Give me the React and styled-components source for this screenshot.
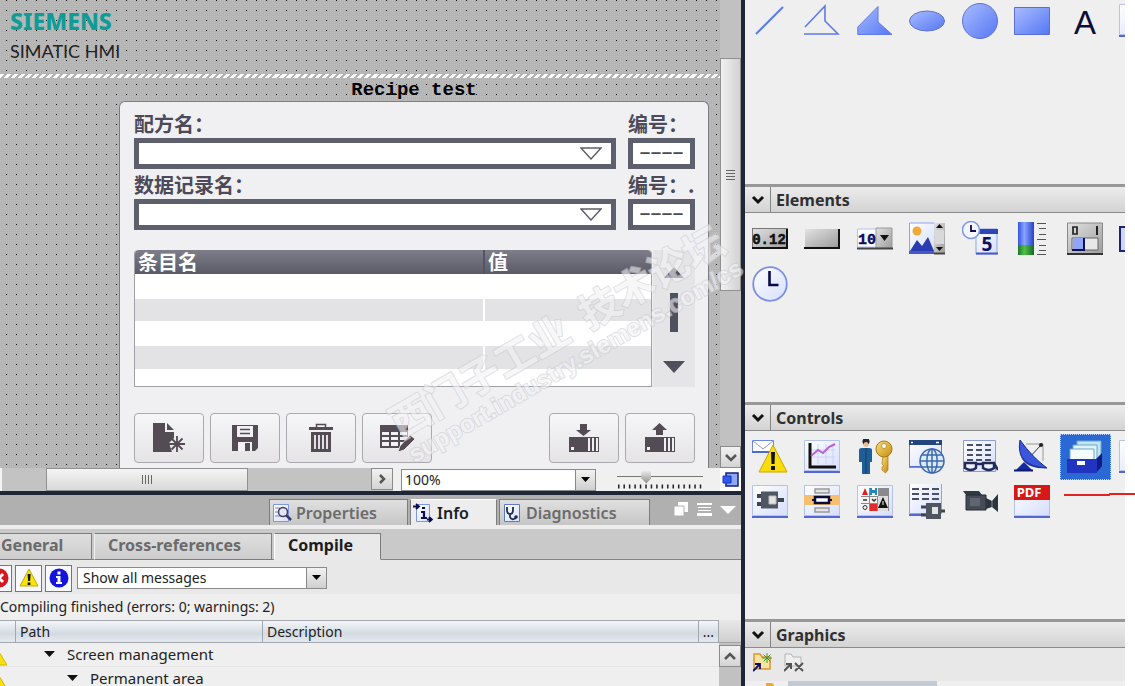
import React from "react";
import styled, { createGlobalStyle, css } from "styled-components";

const ui = `"Noto Sans", "Open Sans", "Liberation Sans", sans-serif`;
const cjk = `"Noto Sans CJK SC", "Noto Sans", sans-serif`;
const bevel = "linear-gradient(#f4f4f4, #d9d9d9)";

const Global = createGlobalStyle`
  * { box-sizing: border-box; }
  body { margin: 0; background: #fff; font-family: ${ui}; font-size: 14px; color: #222; }
  button, select, input { font: inherit; color: inherit; margin: 0; padding: 0; border-radius: 0; outline: none; }
  svg { display: block; }
`;

const Shell = styled.div`
  display: flex;
  height: 100vh;
  overflow: hidden;
  padding-right: 10px;
`;
const Workspace = styled.main`
  position: relative;
  flex: 1;
  min-width: 0;
  display: flex;
  flex-direction: column;
  border-right: 4px solid #1f2636;
`;

/* ---------- screen editor ---------- */
const Editor = styled.section`
  display: flex;
  flex: none;
`;
const dots = css`
  background-color: #b4b4b4;
  background-image: conic-gradient(at 1px 1px, transparent 75%, #161616 0),
    conic-gradient(at 1px 1px, transparent 75%, #bebebe 0);
  background-size: 10px 10px, 2px 2px;
`;
const Canvas = styled.div`
  flex: 1;
  min-width: 0;
`;
const Banner = styled.header`
  ${dots}
  background-position: 6px 0, 0 0;
  height: 74px;
  padding: 6px 10px;
`;
const Brand = styled.div`
  font-size: 23px;
  font-weight: 800;
  line-height: 30px;
  color: #0f9c96;
`;
const Product = styled.div`
  font-family: Lato, ${ui};
  font-size: 18px;
  line-height: 30px;
  color: #222;
`;
const Hatch = styled.div`
  height: 4px;
  background: repeating-linear-gradient(135deg, #fff 0 3px, #b4b4b4 3px 5px);
`;
const ScreenBody = styled.div`
  ${dots}
  background-position: 6px 6px, 0 0;
  padding: 0 11px 0 119px;
`;
const ScreenTitle = styled.h1`
  margin: 0;
  text-align: center;
  font: bold 19px/24px "Liberation Mono", monospace;
  height: 23px;
  color: #000;
`;
const Recipe = styled.div`
  background: #f0f0f3;
  border: 1px solid #7c7c82;
  border-bottom: 0;
  border-radius: 6px 6px 0 0;
  padding: 12px 13px 5px 14px;
  font-family: ${cjk};
`;
const FieldRow = styled.div`
  display: grid;
  grid-template-columns: 1fr 67px;
  column-gap: 12px;
  margin-bottom: 6px;
`;
const Field = styled.label`
  display: flex;
  flex-direction: column;
  gap: 4px;
  font-size: 20px;
  font-weight: 700;
  line-height: 20px;
  color: #4c4a58;
  white-space: nowrap;
`;
const arrowOutline = `url("data:image/svg+xml,%3Csvg xmlns='http://www.w3.org/2000/svg' width='22' height='13'%3E%3Cpath d='M1 1h20L11 12z' fill='white' stroke='%235c5d69' stroke-width='1.4'/%3E%3C/svg%3E")`;
const RecipeSelect = styled.select`
  appearance: none;
  height: 31px;
  border: 5px solid #5d5f6c;
  background: #fff ${arrowOutline} no-repeat right 9px center;
`;
const NumberBox = styled.input`
  width: 100%;
  height: 31px;
  padding-bottom: 8px;
  border: 5px solid #5d5f6c;
  background: #fff;
  text-align: center;
  font: 22px/20px "Noto Sans", sans-serif;
  color: #4c4a58;
`;
const ListArea = styled.div`
  display: grid;
  grid-template-columns: 1fr 43px;
  margin: 20px 0 26px;
`;
const EntryTable = styled.table`
  width: 100%;
  table-layout: fixed;
  border-collapse: separate;
  border-spacing: 0;
  background: #fff;
  border: 1px solid #a0a0a8;
  border-top: 0;
  border-radius: 4px 4px 0 0;
  th {
    height: 24px;
    padding: 0 3px;
    text-align: left;
    font-size: 20px;
    line-height: 24px;
    color: #fff;
    background: linear-gradient(#7e7e8a, #5b5b68);
  }
  th:first-child { border-radius: 4px 0 0 0; }
  th:last-child { border-radius: 0 4px 0 0; }
  th + th { border-left: 2px solid #555462; }
`;
const EntryRow = styled.tr`
  td {
    height: ${(p) => p.$h}px;
    padding: 0;
    background: ${(p) => (p.$alt ? "#e3e3e5" : "#fff")};
  }
  td + td { border-left: 2px solid #fff; }
`;
const ListScroll = styled.div`
  display: flex;
  flex-direction: column;
  align-items: center;
  margin-left: 1px;
  padding-top: 17px;
  background: #e5e5e8;
`;
const ListGrip = styled.div`
  width: 8px;
  height: 39px;
  margin: 14px 0 29px;
  background: #4f505e;
`;
const ButtonRow = styled.div`
  display: flex;
  gap: 6px;
`;
const Spacer = styled.div`
  flex: 1;
`;
const RecipeButton = styled.button`
  width: 70px;
  height: 50px;
  display: grid;
  place-items: center;
  background: linear-gradient(#f6f6f8, #e5e3e6);
  border: 1px solid #a9a9b0;
  border-radius: 4px;
`;

/* ---------- scroll bars ---------- */
const VScroll = styled.div`
  width: ${(p) => p.$w || 21}px;
  flex: none;
  display: flex;
  flex-direction: column;
  background: #c1c1c1;
  padding-top: ${(p) => p.$top}px;
`;
const Thumb = styled.div`
  display: grid;
  place-items: center;
  border: 1px solid #fff;
  outline: 1px solid #909090;
  outline-offset: -1px;
  background: ${(p) => (p.$h ? "linear-gradient(90deg, #f0f0f0, #d2d2d2)" : bevel)};
  ${(p) => (p.$h ? `height: ${p.$h}px;` : `width: ${p.$w}px; height: 100%;`)}
`;
const ScrollButton = styled.button`
  width: ${(p) => p.$w || 22}px;
  height: 22px;
  flex: none;
  display: grid;
  place-items: center;
  border: 1px solid #8b8b8b;
  background: linear-gradient(#f2f2f2, #d4d4d4);
`;
const StatusBar = styled.div`
  flex: none;
  display: flex;
  align-items: center;
  height: 23px;
  background: #f0f0f0;
`;
const HScroll = styled.div`
  flex: 1;
  height: 100%;
  display: flex;
  margin-right: 8px;
  background: #c3c3c3;
  border-left: 2px solid #f4f4f4;
  padding-left: 44px;
`;
const comboArrow = `url("data:image/svg+xml,%3Csvg xmlns='http://www.w3.org/2000/svg' width='20' height='20'%3E%3Cdefs%3E%3ClinearGradient id='g' x2='0' y2='1'%3E%3Cstop stop-color='%23f2f2f2'/%3E%3Cstop offset='1' stop-color='%23cfcfcf'/%3E%3C/linearGradient%3E%3C/defs%3E%3Cpath d='M0 0h20v20H0z' fill='url(%23g)'/%3E%3Cpath d='M.5 0v20' stroke='%23888'/%3E%3Cpath d='M6 7h9l-4.500 5z'/%3E%3C/svg%3E")`;
const Combo = styled.select`
  appearance: none;
  width: ${(p) => p.$w}px;
  height: 22px;
  padding: 0 24px 0 ${(p) => p.$pad}px;
  border: 1px solid #8a8a8a;
  background: #fff ${comboArrow} no-repeat right center;
  font-size: 14px;
  line-height: 20px;
`;
const ZoomBox = styled.div`
  width: 86px;
  margin: 0 17px 0 21px;
  display: flex;
  flex-direction: column;
`;
const ZoomRange = styled.input`
  appearance: none;
  width: 100%;
  height: 13px;
  background: linear-gradient(#777, #777) no-repeat 0 5px / 100% 1px;
  &::-webkit-slider-thumb {
    appearance: none;
    width: 10px;
    height: 13px;
    background: linear-gradient(#e8e8e8, #8c8c8c);
    clip-path: polygon(0 0, 100% 0, 100% 60%, 50% 100%, 0 60%);
  }
`;
const FitButton = styled.button`
  width: 21px;
  height: 23px;
  border: 0;
  background: #fff;
  display: grid;
  place-items: center;
`;

const Watermark = styled.div`
  position: absolute;
  z-index: 3;
  left: 382px;
  top: 407px;
  transform: rotate(-30deg);
  transform-origin: 0 0;
  white-space: pre;
  pointer-events: none;
  opacity: 0.6;
  font: bold 40px/40px "Noto Sans CJK SC", sans-serif;
  color: #f3f3f5;
  paint-order: stroke fill;
  -webkit-text-stroke: 2px #cbcbd0;
  small {
    display: block;
    font: bold 24px/34px "Liberation Sans", sans-serif;
  }
`;

/* ---------- inspector ---------- */
const Inspector = styled.section`
  flex: 1;
  min-height: 0;
  overflow: hidden;
  display: flex;
  flex-direction: column;
  border-top: 4px solid #1f2636;
  background: #efefef;
`;
const MainTabs = styled.div`
  flex: none;
  display: flex;
  gap: 2px;
  height: 34px;
  padding: 4px 5px 0 269px;
  background: #b0b0b0;
  border-bottom: 4px solid #ededed;
`;
const MainTab = styled.button`
  width: ${(p) => p.$w}px;
  display: flex;
  align-items: center;
  gap: 4px;
  padding: 0 2px;
  font-size: 16px;
  font-weight: 600;
  line-height: 24px;
  color: ${(p) => (p.$on ? "#1c1c24" : "#6b6b6b")};
  background: ${(p) => (p.$on ? "#ededed" : "linear-gradient(#e0e0e0, #c6c6c6)")};
  border: 1px solid #7d7d7d;
  border-top-color: ${(p) => (p.$on ? "#fff" : "#7d7d7d")};
  border-bottom: 0;
`;
const WindowTools = styled.div`
  margin-left: auto;
  display: flex;
  gap: 8px;
  padding-top: 3px;
`;
const SubTabs = styled.div`
  flex: none;
  display: flex;
  gap: 2px;
  height: 31px;
  margin-left: -13px;
  padding-top: 4px;
  background: linear-gradient(#c9c9c9 30px, #858585 30px);
`;
const SubTab = styled.button`
  width: ${(p) => p.$w}px;
  padding: 0 13px 4px;
  font-size: 16px;
  font-weight: 700;
  line-height: 22px;
  text-align: left;
  color: ${(p) => (p.$on ? "#1c1c24" : "#6b6b6b")};
  background: ${(p) => (p.$on ? "#e9e9e9" : "linear-gradient(#dedede, #cdcdcd)")};
  border: 1px solid #7d7d7d;
  border-left-color: ${(p) => (p.$on ? "#fff" : "#efefef")};
  border-bottom-color: ${(p) => (p.$on ? "#e9e9e9" : "#7d7d7d")};
`;
const FilterBar = styled.div`
  flex: none;
  display: flex;
  align-items: center;
  gap: 3px;
  height: 34px;
  margin-left: -15px;
  padding-top: 2px;
  background: #e8e8e8;
  select { margin-left: 2px; }
`;
const FilterButton = styled.button`
  width: 27px;
  height: 27px;
  display: grid;
  place-items: center;
  border: 1px solid #4a78d8;
  background: #f7f9ff;
`;
const Summary = styled.div`
  flex: none;
  height: 26px;
  line-height: 26px;
  font-size: 14px;
  white-space: nowrap;
`;
const Messages = styled.div`
  flex: 1;
  min-height: 0;
  display: flex;
`;
const MessageTable = styled.table`
  flex: 1;
  height: 70px;
  table-layout: fixed;
  border-collapse: separate;
  border-spacing: 0;
  th {
    height: 23px;
    padding: 0 4px;
    text-align: left;
    font-size: 14px;
    font-weight: 400;
    line-height: 20px;
    background: linear-gradient(#f4f6f8, #d3dbe2 60%, #e4e9ee);
    border: solid #a2a8ae;
    border-width: 1px 1px 1px 0;
  }
  th:first-child { padding: 0; }
  td {
    height: 24px;
    padding: 1px 0 0;
    vertical-align: top;
    line-height: 20px;
    font-size: 15px;
    border-bottom: 1px solid #e6e6e6;
    white-space: nowrap;
  }
`;
const TreeLabel = styled.span`
  display: flex;
  align-items: center;
  gap: 12px;
  padding-left: ${(p) => p.$indent}px;
`;
const StatusMark = styled.div`
  padding-top: 6px;
`;
const ScrollCap = styled.div`
  height: 23px;
  margin-bottom: 2px;
  background: linear-gradient(#e8e8e8, #cfcfcf);
  border-bottom: 1px solid #a2a2a2;
`;

/* ---------- toolbox ---------- */
const Toolbox = styled.aside`
  width: 380px;
  flex: none;
  display: flex;
  flex-direction: column;
  background: #efefef;
`;
const Palette = styled.div`
  position: relative;
  flex: none;
  height: ${(p) => p.$h}px;
  padding: ${(p) => p.$top}px 0 0 7px;
  display: grid;
  grid-template-columns: repeat(7, 1fr) 6px;
  grid-auto-rows: 36px;
  row-gap: 9px;
`;
const Tool = styled.button`
  position: relative;
  width: 36px;
  max-width: 100%;
  height: 36px;
  border: 0;
  background: none;
  ${(p) => p.$cut && "width: 6px; overflow: hidden;"}
  ${(p) =>
    p.$on &&
    `&::before {
      content: "";
      position: absolute;
      inset: -5px -8px -5px -7px;
      background: #2a68d4;
      border: 1px dotted #b9d2ff;
    }`}
  svg { position: relative; }
`;
const SectionBar = styled.h2`
  flex: none;
  height: 29px;
  margin: 0;
  display: flex;
  border-top: 3px solid #989898;
  border-bottom: 1px solid #8b8b8b;
  background: linear-gradient(#ececec, #d3d3d3);
  font-size: 16px;
  font-weight: 700;
  line-height: 27px;
  color: #303030;
`;
const Fold = styled.button`
  width: 26px;
  display: grid;
  place-items: center;
  border: 0;
  border-right: 1px solid #858585;
  margin-right: 5px;
  background: none;
`;
const Strike = styled.svg`
  position: absolute;
  right: -10px;
  top: 60px;
`;
const GraphicsTools = styled.div`
  flex: none;
  display: flex;
  gap: 10px;
  padding: 4px 8px 8px;
  height: 33px;
  background: #e8e8e8;
`;
const PlainButton = styled.button`
  border: 0;
  background: none;
`;
const FolderRow = styled.div`
  display: flex;
  height: 22px;
  padding: 0 0 0 21px;
  gap: 14px;
`;
const FolderName = styled.div`
  width: 149px;
  background: #c2cbd4;
`;

/* ---------- drawings ---------- */
const Svg = ({ s = 36, w, h, v, children }) => (
  <svg width={w || s} height={h || s} viewBox={v || `0 0 ${w || s} ${h || s}`} aria-hidden="true">
    {children}
  </svg>
);
const DefsSvg = styled.svg`
  position: absolute;
`;
const Defs = () => (
  <DefsSvg width="0" height="0" aria-hidden="true">
    <defs>
      <linearGradient id="blue" x2="1" y2="1"><stop stopColor="#a9bcff" /><stop offset="1" stopColor="#5577f4" /></linearGradient>
      <linearGradient id="gray" x2="1" y2="1"><stop stopColor="#e2e2e2" /><stop offset="1" stopColor="#9d9d9d" /></linearGradient>
      <linearGradient id="paper" x2="1" y2="1"><stop stopColor="#fff" /><stop offset="1" stopColor="#d5defd" /></linearGradient>
      <linearGradient id="gold" x2="1" y2="1"><stop stopColor="#fbe27a" /><stop offset="1" stopColor="#c48a10" /></linearGradient>
      <linearGradient id="barBlue" x2="1"><stop stopColor="#3453e0" /><stop offset="0.4" stopColor="#8aa4ff" /><stop offset="1" stopColor="#2440c8" /></linearGradient>
      <linearGradient id="barGreen" x2="1"><stop stopColor="#197a25" /><stop offset="0.4" stopColor="#4fbf4a" /><stop offset="1" stopColor="#156a20" /></linearGradient>
    </defs>
  </DefsSvg>
);
const Sheet = () => (
  <>
    <path d="M.5 1.500h35v30H.5z" fill="url(#paper)" stroke="#b4c2ee" />
    <path d="M0 32h36v2H0z" fill="#5468cf" />
  </>
);
const Chevron = ({ d = "M2 3l5 5 5-5", c = "#111", w = 3 }) => (
  <Svg w={14} h={11}><path d={d} fill="none" stroke={c} strokeWidth={w} /></Svg>
);
const Down = () => <Svg w={11} h={6}><path d="M0 0h11L5.500 6z" fill="#111" /></Svg>;

const shapes = {
  Line: <path d="M4 31L31 4" stroke="#5f7be8" strokeWidth="2" />,
  Polyline: <path d="M1 24L21 3v15l13 13H0" fill="none" stroke="#5f7be8" strokeWidth="1.600" />,
  Polygon: <path d="M.8 24L21 3.500V19l14 12.500H.8z" fill="url(#blue)" stroke="#5f7be8" />,
  Ellipse: <ellipse cx="18" cy="18" rx="17.500" ry="10" fill="url(#blue)" stroke="#5f74c8" />,
  Circle: <circle cx="18" cy="18" r="17.500" fill="url(#blue)" stroke="#5f74c8" />,
  Rectangle: <path d="M.5 4.500h35v27H.5z" fill="url(#blue)" stroke="#5b6fd0" />,
  Text: <text x="18" y="31" textAnchor="middle" fontFamily="Liberation Sans" fontSize="33" fill="#0c0c38">A</text>,
};

const elements = {
  "I/O field": (
    <>
      <path d="M0 7h36v21H0z" fill="url(#gray)" /><path d="M0 7.500h36M.5 7v21" stroke="#777" /><path d="M0 27h35V8" fill="none" stroke="#111" strokeWidth="2" />
      <text x="17" y="23" textAnchor="middle" fontFamily="Liberation Mono" fontWeight="bold" fontSize="14" fill="#111" stroke="#111" strokeWidth=".5">0.12</text>
    </>
  ),
  Button: (
    <>
      <path d="M1 8h33v18H1z" fill="url(#gray)" /><path d="M0 27h35V8" fill="none" stroke="#111" strokeWidth="2" />
    </>
  ),
  "Symbolic I/O field": (
    <>
      <path d="M.5 8h19v18H.5z" fill="#fff" stroke="#b4c2ee" /><path d="M19 7h16v20H19z" fill="url(#gray)" stroke="#999" />
      <path d="M0 27.500h36" stroke="#444" strokeWidth="2" /><path d="M23 14h9l-4.500 6z" fill="#111" />
      <text x="10" y="23" textAnchor="middle" fontFamily="Liberation Mono" fontWeight="bold" fontSize="15" fill="#0a0a66" stroke="#0a0a66" strokeWidth=".4">10</text>
    </>
  ),
  "Graphic I/O field": (
    <>
      <path d="M.5 2h25v29H.5z" fill="url(#paper)" stroke="#8fa3ea" /><circle cx="8" cy="10" r="4.500" fill="#f3a93a" />
      <path d="M1 30l7-11 5 6 6-9 6 14z" fill="#2b3bb0" /><path d="M0 30h25v3H0z" fill="#4659c4" />
      <path d="M25 2h11v30H25z" fill="url(#gray)" /><path d="M26 9h9v14h-9z" fill="#d9d9d9" />
      <path d="M27 7h7l-3.500-4zM27 26h7l-3.500 4z" fill="#111" /><path d="M25 32.500h11" stroke="#444" strokeWidth="2" />
    </>
  ),
  "Date/time field": (
    <>
      <path d="M14 8h21v25H14z" fill="url(#paper)" stroke="#8fa3ea" /><path d="M14 8h22v5H14z" fill="#2d45b8" /><path d="M14 32.500h22" stroke="#4659c4" strokeWidth="2" />
      <circle cx="9" cy="9" r="8.500" fill="#f4f7ff" stroke="#7f96e2" strokeWidth="1.500" /><path d="M9 4v6h5" fill="none" stroke="#0a0a55" strokeWidth="1.800" />
      <text x="25" y="30" textAnchor="middle" fontFamily="Noto Sans" fontWeight="bold" fontSize="19" fill="#10105e">5</text>
    </>
  ),
  Bar: (
    <>
      <path d="M4 1h16v23H4z" fill="url(#barBlue)" /><path d="M4 24h16v10H4z" fill="url(#barGreen)" />
      <path d="M23 2.500h9M25 7.500h7M25 13.500h7M23 18.500h9M25 24.500h7M25 29.500h7M23 33.500h9" stroke="#555" />
    </>
  ),
  Switch: (
    <>
      <path d="M.5 2h35v31H.5z" fill="url(#gray)" stroke="#888" /><path d="M0 33h36" stroke="#333" strokeWidth="2" />
      <path d="M5 17h26v12H5z" fill="#e7e7e7" stroke="#666" /><path d="M6 17h11v12H6z" fill="#8ea6f5" /><path d="M5 29h12V17" fill="none" stroke="#111155" strokeWidth="2" />
      <path d="M6 6h4v7H6z" fill="none" stroke="#222" strokeWidth="1.700" /><path d="M30 5v9" stroke="#222" strokeWidth="2" />
    </>
  ),
};
const Clock = (
  <>
    <circle cx="18" cy="18" r="16.800" fill="url(#paper)" stroke="#7d8fe0" strokeWidth="1.800" />
    <path d="M17.500 5v14h9" fill="none" stroke="#0a0a4a" strokeWidth="2.600" />
  </>
);

const Globe = ({ cx, cy, r }) => (
  <g fill="none" stroke="#3c69ad" strokeWidth="1.500">
    <circle cx={cx} cy={cy} r={r} fill="#d9ebfb" /><ellipse cx={cx} cy={cy} rx={r / 2.3} ry={r} />
    <path d={`M${cx - r} ${cy}h${2 * r}M${cx} ${cy - r}v${2 * r}M${cx - r + 2} ${cy - r / 2}h${2 * r - 4}M${cx - r + 2} ${cy + r / 2}h${2 * r - 4}`} />
  </g>
);
const Plug = () => (
  <>
    <path d="M5 12h7M5 20h7M26 16h6" stroke="#3f4550" strokeWidth="4" /><path d="M9 7.500h17v17H9z" fill="#4f5661" />
    <path d="M17 12h7v8h-7z" fill="#e4e4e4" stroke="#bbb" />
  </>
);
const Lines = ({ y = 0 }) => (
  <path d={`M3 ${5 + y}h7M13 ${5 + y}h7M23 ${5 + y}h7M3 ${10 + y}h7M13 ${10 + y}h7M23 ${10 + y}h7M3 ${15 + y}h7M13 ${15 + y}h7M23 ${15 + y}h7`} stroke="#4a4f68" strokeWidth="2" />
);

const controls = [
  ["Alarm view", (
    <>
      <path d="M.5 1.500h21v12H.5z" fill="#fff" stroke="#6f86e0" /><path d="M1 2l10 8L21 2" fill="none" stroke="#8b9cd8" /><path d="M0 13h20" stroke="#5468cf" strokeWidth="2" />
      <path d="M21 6l14 27H7z" fill="#f8dc0c" stroke="#c9a800" /><path d="M19 13h4l-.5 12h-3zM19 27h4v4h-4z" fill="#111" />
    </>
  )],
  ["Trend view", (
    <>
      <Sheet /><path d="M14 5v20M22 5v20M29 5v20M8 11h23M8 18h23" stroke="#ccd3ee" />
      <path d="M6 4v24h26" fill="none" stroke="#111" strokeWidth="3" /><path d="M7 17l7-6 5 3 6-6 6-3" fill="none" stroke="#b562d8" strokeWidth="2" />
    </>
  )],
  ["User view", (
    <>
      <circle cx="9" cy="2.500" r="3.500" fill="#22242f" /><circle cx="9" cy="5.500" r="2.500" fill="#e8bd93" />
      <path d="M2 11q0-2 3-2h7q3 0 3 2v12h-2v12H5V23H2z" fill="#1f5d97" /><path d="M9 9v26" stroke="#123f6c" />
      <path d="M26 16h5v15l-2.500 3-3.500-3v-3l2-1-2-2z" fill="url(#gold)" stroke="#a87a14" strokeWidth=".7" />
      <circle cx="27" cy="10" r="8" fill="url(#gold)" stroke="#a87a14" /><circle cx="27" cy="7" r="2.500" fill="#fff" stroke="#a87a14" strokeWidth=".7" />
    </>
  )],
  ["HTML browser", (
    <>
      <path d="M.5 1.500h32v26H.5z" fill="url(#paper)" stroke="#5f7fbb" /><path d="M0 1h33v5H0z" fill="#24467e" /><path d="M2 3.500h2M27 3.500h3" stroke="#fff" strokeWidth="1.500" />
      <path d="M0 28h16" stroke="#5468cf" strokeWidth="1.500" /><Globe cx={23} cy={22} r={12} />
    </>
  )],
  ["Watch table", (
    <>
      <path d="M1.500 1.500h32v31h-32z" fill="url(#paper)" stroke="#8b9ad0" />
      <path d="M5 6h6M14 6h6M23 6h6M5 11h6M14 11h6M23 11h6M5 16h6M14 16h6M23 16h6M5 21h6M14 21h6M23 21h6" stroke="#4a4f68" strokeWidth="2" />
      <path d="M3 24h11v5q-5 4-11 0zM21 24h11v5q-5 4-11 0z" fill="#eef1ff" stroke="#222a5c" strokeWidth="2.400" /><path d="M14 25h7M32 24l4 7" stroke="#222a5c" strokeWidth="2.400" />
    </>
  )],
  ["System diagnostics", (
    <>
      <path d="M12 5h17v17" fill="none" stroke="#999" /><path d="M14 20L27 6" stroke="#333" /><circle cx="27" cy="6" r="2" fill="#222" />
      <path d="M1 32l9-9 9 9z" fill="#152a9c" /><path d="M0 31.500h19" stroke="#0d1c70" strokeWidth="2" />
      <path d="M6 1Q1 27 33 29 19 19 6 1z" fill="#3a56dc" stroke="#1b2c8d" /><path d="M5 12Q9 27 33 29 9 31 5 12z" fill="#203399" />
    </>
  )],
  ["Recipe view", (
    <>
      <path d="M10 2h24v22H10z" fill="#bfe6f2" stroke="#6aa6c4" /><path d="M6 6h24v20H6z" fill="#dff4fa" stroke="#6aa6c4" /><path d="M3 10h24v14H3z" fill="#f4fcff" stroke="#6aa6c4" />
      <path d="M29 20l6-6v13l-6 7z" fill="#101d86" /><path d="M0 20h30v14H0z" fill="#2134c0" />
      <path d="M10 22h8v4h-8z" fill="#fff" />
    </>
  )],
  ["f(x) trend view", <Sheet />],
  ["Sm@rtClient", <><Sheet /><Plug /></>],
  ["Status force", (
    <>
      <Sheet /><path d="M0 11h36v10H0z" fill="#f7be6e" /><path d="M11 5h14v4H11zM11 24h14v4H11z" fill="#e4e4e4" stroke="#999" strokeWidth="1.500" />
      <path d="M8 16h20" stroke="#111" strokeWidth="2" /><path d="M11 13h14v6H11z" fill="#fff" stroke="#0b0b38" strokeWidth="2.500" />
    </>
  )],
  ["Symbol library", (
    <>
      <Sheet /><path d="M4 4h28v23H4z" fill="#8a8a8a" /><path d="M4 4h8v8H4zM13 4h8v8h-8z" fill="#fff" /><path d="M5 11l3-7 3 7z" fill="#dd2020" /><path d="M13 4h2v7h-2zM18 4h2v7h-2zM15 6h3v3h-3z" fill="#2088b8" />
      <path d="M4 13h8v6H4zM13 13h7v6h-7zM4 20h8v7H4z" fill="#f4f4f4" /><circle cx="8" cy="23.500" r="2" fill="none" stroke="#333" /><path d="M6 16h4M15 15l2 2 2-2" stroke="#333" fill="none" strokeWidth="1.500" />
      <path d="M13 20h7v7h-7z" fill="#e02c2c" /><path d="M21 12h10v15H21z" fill="#ddd" /><path d="M26 13l5 11H21z" fill="#111" /><path d="M26 17v4" stroke="#fff" />
    </>
  )],
  ["PLC code view", (
    <>
      <path d="M.5 -.5h32v30H.5z" fill="url(#paper)" stroke="#8fa3ea" /><path d="M0 31h14" stroke="#5468cf" strokeWidth="2" /><Lines />
      <path d="M12 23h6M12 31h6M31 27h6" stroke="#3f4550" strokeWidth="3" /><path d="M17 19h15v16H17z" fill="#4f5661" /><path d="M23 23h6v7h-6z" fill="#e4e4e4" />
    </>
  )],
  ["Camera view", (
    <>
      <path d="M1 7h16l3 4H4z" fill="#333943" /><path d="M4 11h20v15H4z" fill="#454c57" stroke="#272c33" /><path d="M24 14l6 3 6-7v18l-6-5-6 2z" fill="#2f353d" />
      <path d="M8 14h10v8H8z" fill="#5f6772" /><path d="M30 17v6" stroke="#888" />
    </>
  )],
  ["PDF view", (
    <>
      <Sheet /><path d="M0 1h36v15H0z" fill="#d81818" />
      <text x="15" y="13" textAnchor="middle" fontFamily="Noto Sans" fontWeight="bold" fontSize="13" fill="#fff">PDF</text>
    </>
  )],
];

const ink = "#544c54";
const recipeLeft = [
  ["New record", <Svg w={34} h={32}><path d="M1 1h14l7 7v8l-5 5 3 9H1z" fill={ink} /><path d="M14 1v8h8" fill="none" stroke="#f0f0f2" strokeWidth="2" /><path d="M25 14v16M17 22h16M19.500 16.500l11 11M30.500 16.500l-11 11" stroke={ink} strokeWidth="1.800" /></Svg>],
  ["Save record", <Svg w={28} h={28}><path d="M1 1h26v23l-3 3H1z" fill={ink} /><path d="M6 2h16v11H6zM7 18h14v9H7z" fill="#f2f2f4" /><path d="M9 5.500h10M9 9.500h10" stroke={ink} strokeWidth="1.400" /><path d="M14 19h5v8h-5z" fill={ink} /></Svg>],
  ["Delete record", <Svg w={26} h={30}><path d="M1 4h24v3H1z" fill={ink} /><path d="M8.500 4V1.500h9V4" fill="none" stroke={ink} strokeWidth="1.500" /><path d="M3 9h20v20H3z" fill={ink} /><path d="M7 12v14M11 12v14M15 12v14M19 12v14" stroke="#f0f0f2" strokeWidth="1.800" /></Svg>],
  ["Edit record", <Svg w={36} h={30}><path d="M1 2h28v23H1z" fill={ink} /><path d="M3 9h7v3H3zM12 9h7v3h-7zM21 9h7v3h-7zM3 14h7v3H3zM12 14h7v3h-7zM21 14h7v3h-7zM3 19h7v4H3zM12 19h7v4h-7zM21 19h8v6h-8z" fill="#f2f2f4" /><path d="M19 29l2-6L31 12l5 4-11 11z" fill={ink} stroke="#f0f0f2" strokeWidth=".8" /></Svg>],
];
const Device = () => (
  <><path d="M1 14h30v15H1z" fill={ink} /><path d="M21 15v13M25 15v13M29 15v13" stroke="#f0f0f2" strokeWidth="2" /><path d="M3 24h3v3H3z" fill="#f0f0f2" /></>
);
const recipeRight = [
  ["Write to PLC", <Svg w={32} h={30}><Device /><path d="M12 1h7v6h4l-7.500 6L8 7h4z" fill={ink} /></Svg>],
  ["Read from PLC", <Svg w={32} h={30}><Device /><path d="M12 12h7V7h4l-7.500-7L8 7h4z" fill={ink} /></Svg>],
];

const WarnIcon = ({ s = 20 }) => (
  <Svg w={s} h={s} v="0 0 20 20"><path d="M10 1l9 17H1z" fill="#fbe30a" stroke="#c2ab00" /><path d="M8.600 6h3l-.5 7H9.100zM8.600 14.500h2.800v2.500H8.600z" fill="#111" /></Svg>
);

const Section = ({ title }) => (
  <SectionBar>
    <Fold aria-label={`Collapse ${title}`}><Chevron /></Fold>
    {title}
  </SectionBar>
);

const TreeRow = ({ indent, children }) => (
  <tr>
    <td><StatusMark><Svg w={7} h={16} v="7 0 7 16"><path d="M6 2l8 13H-2z" fill="#f7df10" stroke="#cdb600" /></Svg></StatusMark></td>
    <td colSpan="3"><TreeLabel $indent={indent}><Down />{children}</TreeLabel></td>
  </tr>
);

const rows = [[25, 0], [22, 1], [25, 0], [23, 1], [17, 0]];

export default function App() {
  return (
    <Shell>
      <Global />
      <Defs />
      <Workspace>
        <Editor>
          <Canvas>
            <Banner>
              <Brand>SIEMENS</Brand>
              <Product>SIMATIC HMI</Product>
            </Banner>
            <Hatch />
            <ScreenBody>
              <ScreenTitle>Recipe test</ScreenTitle>
              <Recipe>
                <FieldRow>
                  <Field>配方名：<RecipeSelect /></Field>
                  <Field>编号：<NumberBox defaultValue="––––" /></Field>
                </FieldRow>
                <FieldRow>
                  <Field>数据记录名：<RecipeSelect /></Field>
                  <Field>编号：.<NumberBox defaultValue="––––" /></Field>
                </FieldRow>
                <ListArea>
                  <EntryTable>
                    <colgroup><col width="348" /><col /></colgroup>
                    <thead><tr><th>条目名</th><th>值</th></tr></thead>
                    <tbody>
                      {rows.map(([h, alt], i) => <EntryRow key={i} $h={h} $alt={alt}><td /><td /></EntryRow>)}
                    </tbody>
                  </EntryTable>
                  <ListScroll>
                    <Svg w={22} h={12}><path d="M1 11L11 0l10 11z" fill="#4f505e" /></Svg>
                    <ListGrip />
                    <Svg w={22} h={12}><path d="M0 0h22L11 12z" fill="#4f505e" /></Svg>
                  </ListScroll>
                </ListArea>
                <ButtonRow>
                  {recipeLeft.map(([n, i]) => <RecipeButton key={n} aria-label={n}>{i}</RecipeButton>)}
                  <Spacer />
                  {recipeRight.map(([n, i]) => <RecipeButton key={n} aria-label={n}>{i}</RecipeButton>)}
                </ButtonRow>
              </Recipe>
            </ScreenBody>
          </Canvas>
          <VScroll $top={58}>
            <Thumb $h={233}><Svg w={9} h={10}><path d="M0 .5h9M0 3.500h9M0 6.500h9M0 9.500h9" stroke="#666" /></Svg></Thumb>
            <Spacer />
            <ScrollButton $w={21} aria-label="Scroll down"><Chevron c="#555" w={2.5} /></ScrollButton>
          </VScroll>
        </Editor>
        <StatusBar>
          <HScroll>
            <Thumb $w={202}><Svg w={10} h={9}><path d="M.5 0v9M3.500 0v9M6.500 0v9M9.500 0v9" stroke="#666" /></Svg></Thumb>
            <Spacer />
            <ScrollButton aria-label="Scroll right"><Svg w={11} h={12}><path d="M3 2l4 4-4 4" fill="none" stroke="#555" strokeWidth="2.500" /></Svg></ScrollButton>
          </HScroll>
          <Combo $w={195} $pad={3} aria-label="Zoom"><option>100%</option></Combo>
          <ZoomBox>
            <ZoomRange type="range" defaultValue="32" aria-label="Zoom level" />
            <Svg w={86} h={5}><path d="M1 2.500h85" stroke="#222" strokeWidth="4" strokeDasharray="1.500 3.950" /></Svg>
          </ZoomBox>
          <FitButton aria-label="Fit to window">
            <Svg w={17} h={16}><path d="M4 1h12v13H4z" fill="#8fa8f0" stroke="#14207a" strokeWidth="1.500" /><path d="M1 4h8v7H1z" fill="#2f5bf0" stroke="#1734b8" /></Svg>
          </FitButton>
        </StatusBar>
        <Inspector>
          <MainTabs>
            <MainTab $w={139}>
              <Svg s={20}><path d="M1.500 1.500h15v17h-15z" fill="url(#paper)" stroke="#7e96ea" /><path d="M3 5h5M3 9h3M3 13h5" stroke="#6d83d6" /><circle cx="11" cy="9" r="4.500" fill="#dfe6fb" stroke="#4a3f4a" strokeWidth="1.500" /><path d="M14 12l5 5" stroke="#3a3a66" strokeWidth="2.500" /></Svg>
              Properties
            </MainTab>
            <MainTab $w={87} $on>
              <Svg s={20}><path d="M3.500 1.500h13v17h-13z" fill="url(#paper)" stroke="#7e96ea" /><path d="M0 3.500h5M3 1l3 2.500L3 6M14 16.500h5M16 14l3 2.500-3 2.500" stroke="#0c0c50" strokeWidth="1.800" fill="none" /><path d="M8 9h3v6M8 15h6M9 5h3" stroke="#0c0c50" strokeWidth="2.200" fill="none" /></Svg>
              Info
            </MainTab>
            <MainTab $w={151}>
              <Svg s={20}><path d="M2.500 1.500h15v17h-15z" fill="url(#paper)" stroke="#5c78c8" /><path d="M5 4v3q0 4 3 4t3-4V4M8 11v3q1 3 4 2l2-1" fill="none" stroke="#1e2c50" strokeWidth="1.800" /><circle cx="14" cy="14" r="1.800" fill="#1e2c50" /></Svg>
              Diagnostics
            </MainTab>
            <WindowTools>
              <Svg w={15} h={15}><path d="M4 0h10v10H4z" fill="#fff" /><path d="M0 4h10v10H0z" fill="#fff" stroke="#b0b0b0" /></Svg>
              <Svg w={15} h={15}><path d="M0 1h15v2H0zM1 5h13v1H1zM1 8h13v1H1zM0 11h15v3H0z" fill="#fff" /></Svg>
              <Svg w={16} h={15}><path d="M0 4h16l-8 8z" fill="#fff" /></Svg>
            </WindowTools>
          </MainTabs>
          <SubTabs>
            <SubTab $w={105}>General</SubTab>
            <SubTab $w={178}>Cross-references</SubTab>
            <SubTab $w={107} $on>Compile</SubTab>
          </SubTabs>
          <FilterBar>
            <FilterButton aria-label="Errors"><Svg s={20}><circle cx="10" cy="10" r="9.500" fill="#d8171d" /><path d="M6 6l8 8M14 6l-8 8" stroke="#fff" strokeWidth="3" /></Svg></FilterButton>
            <FilterButton aria-label="Warnings"><WarnIcon /></FilterButton>
            <FilterButton aria-label="Information"><Svg s={20}><circle cx="10" cy="10" r="9.500" fill="#1414e0" /><path d="M8.500 3.500h3v3h-3zM7 8h4.500v6H13v2H7v-2h1.500v-4H7z" fill="#fff" /></Svg></FilterButton>
            <Combo $w={250} $pad={5} aria-label="Message filter"><option>Show all messages</option></Combo>
          </FilterBar>
          <Summary>Compiling finished (errors: 0; warnings: 2)</Summary>
          <Messages>
            <MessageTable>
              <colgroup><col width="16" /><col width="247" /><col /><col width="18" /></colgroup>
              <thead><tr><th aria-label="Status" /><th>Path</th><th>Description</th><th>...</th></tr></thead>
              <tbody>
                <TreeRow indent={28}>Screen management</TreeRow>
                <TreeRow indent={51}>Permanent area</TreeRow>
              </tbody>
            </MessageTable>
            <VScroll $w={22} $top={0}>
              <ScrollCap />
              <ScrollButton aria-label="Scroll up"><Chevron d="M2 8l5-5 5 5" c="#555" w={2.5} /></ScrollButton>
            </VScroll>
          </Messages>
        </Inspector>
        <Watermark aria-hidden="true">西门子工业  技术论坛<small>support.industry.siemens.com/cs</small></Watermark>
      </Workspace>
      <Toolbox>
        <Palette $h={184} $top={3}>
          {Object.entries(shapes).map(([n, d]) => <Tool key={n} aria-label={n}><Svg>{d}</Svg></Tool>)}
          <Tool $cut aria-label="Graphic view"><Svg><Sheet /></Svg></Tool>
        </Palette>
        <Section title="Elements" />
        <Palette $h={189} $top={8}>
          {Object.entries(elements).map(([n, d]) => <Tool key={n} aria-label={n}><Svg>{d}</Svg></Tool>)}
          <Tool $cut aria-label="Symbol"><Svg><path d="M1 6h34v24H1z" fill="#cdd6fa" stroke="#1c2670" strokeWidth="2" /></Svg></Tool>
          <Tool aria-label="Clock"><Svg>{Clock}</Svg></Tool>
        </Palette>
        <Section title="Controls" />
        <Palette $h={188} $top={8}>
          {controls.map(([n, d], i) => <Tool key={n} aria-label={n} $on={i === 6} $cut={i === 7}><Svg>{d}</Svg></Tool>)}
          <Strike width="71" height="6" viewBox="0 0 71 6" aria-hidden="true"><path d="M0 4h45l1-1h25" fill="none" stroke="#e3211f" strokeWidth="2" /></Strike>
        </Palette>
        <Section title="Graphics" />
        <GraphicsTools>
          <PlainButton aria-label="Add link to folder">
            <Svg s={21}><path d="M1 2h6l2 3h8v12H1z" fill="#f8e2a0" stroke="#d9962a" strokeWidth="1.500" /><path d="M14 1v10M9 6h10M10.500 2.500l7 7M17.500 2.500l-7 7" stroke="#3f9a3a" /><path d="M0 19l6-6M2 12h5v5" fill="none" stroke="#0c0c66" strokeWidth="1.800" /></Svg>
          </PlainButton>
          <PlainButton aria-label="Remove link">
            <Svg s={21}><path d="M1 2h6l2 3h8v9H1z" fill="#efefef" stroke="#b4b4b4" /><path d="M0 19l6-6M2 12h5v5M11 11l8 8M19 11l-8 8" fill="none" stroke="#555" strokeWidth="2" /></Svg>
          </PlainButton>
        </GraphicsTools>
        <FolderRow>
          <Svg w={8} h={14}><path d="M0 4V2h6l2 2v10H0z" fill="#eda63a" /></Svg>
          <FolderName />
        </FolderRow>
      </Toolbox>
    </Shell>
  );
}
